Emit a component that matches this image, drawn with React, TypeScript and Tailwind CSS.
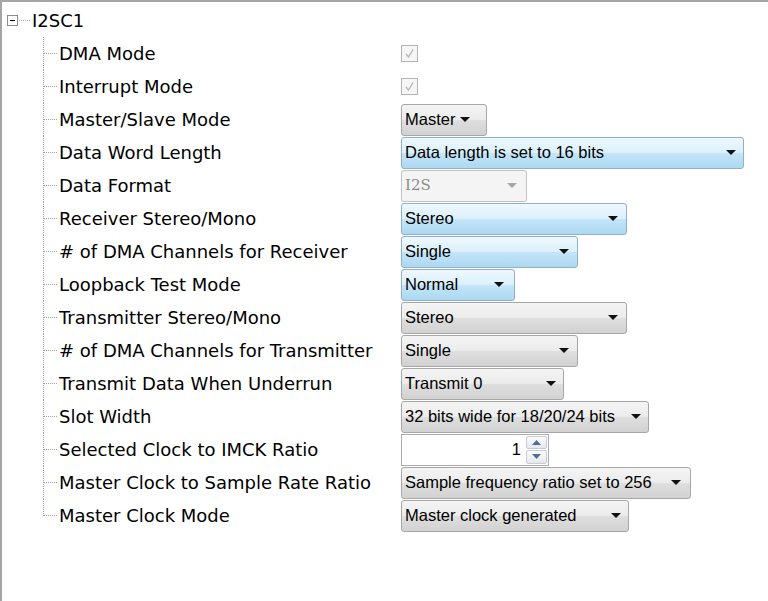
import React from 'react';

type Tone = 'gray' | 'blue' | 'off';

type Ctrl =
  | { kind: 'check' }
  | { kind: 'combo'; value: string; w: string; tone: Tone; pr: string }
  | { kind: 'spin'; value: string; w: string };

interface Row {
  label: string;
  ctrl: Ctrl;
}

const rows: Row[] = [
  { label: 'DMA Mode', ctrl: { kind: 'check' } },
  { label: 'Interrupt Mode', ctrl: { kind: 'check' } },
  { label: 'Master/Slave Mode', ctrl: { kind: 'combo', value: 'Master', w: 'w-[86px]', tone: 'gray', pr: 'pr-[16px]' } },
  { label: 'Data Word Length', ctrl: { kind: 'combo', value: 'Data length is set to 16 bits', w: 'w-[343px]', tone: 'blue', pr: 'pr-[7px]' } },
  { label: 'Data Format', ctrl: { kind: 'combo', value: 'I2S', w: 'w-[126px]', tone: 'off', pr: 'pr-[9px]' } },
  { label: 'Receiver Stereo/Mono', ctrl: { kind: 'combo', value: 'Stereo', w: 'w-[226px]', tone: 'blue', pr: 'pr-[8px]' } },
  { label: '# of DMA Channels for Receiver', ctrl: { kind: 'combo', value: 'Single', w: 'w-[177px]', tone: 'blue', pr: 'pr-[8px]' } },
  { label: 'Loopback Test Mode', ctrl: { kind: 'combo', value: 'Normal', w: 'w-[114px]', tone: 'blue', pr: 'pr-[10px]' } },
  { label: 'Transmitter Stereo/Mono', ctrl: { kind: 'combo', value: 'Stereo', w: 'w-[226px]', tone: 'gray', pr: 'pr-[8px]' } },
  { label: '# of DMA Channels for Transmitter', ctrl: { kind: 'combo', value: 'Single', w: 'w-[177px]', tone: 'gray', pr: 'pr-[8px]' } },
  { label: 'Transmit Data When Underrun', ctrl: { kind: 'combo', value: 'Transmit 0', w: 'w-[163px]', tone: 'gray', pr: 'pr-[7px]' } },
  { label: 'Slot Width', ctrl: { kind: 'combo', value: '32 bits wide for 18/20/24 bits', w: 'w-[248px]', tone: 'gray', pr: 'pr-[7px]' } },
  { label: 'Selected Clock to IMCK Ratio', ctrl: { kind: 'spin', value: '1', w: 'w-[148px]' } },
  { label: 'Master Clock to Sample Rate Ratio', ctrl: { kind: 'combo', value: 'Sample frequency ratio set to 256', w: 'w-[290px]', tone: 'gray', pr: 'pr-[9px]' } },
  { label: 'Master Clock Mode', ctrl: { kind: 'combo', value: 'Master clock generated', w: 'w-[228px]', tone: 'gray', pr: 'pr-[7px]' } },
];

const toneClass: Record<Tone, string> = {
  gray: 'border-[#a7a7a7] bg-[linear-gradient(to_bottom,#f4f4f4_0%,#ececec_48%,#dedede_52%,#d2d2d2_100%)] text-black',
  blue: 'border-[#8fb1c9] bg-[linear-gradient(to_bottom,#eef8fd_0%,#dcf0fb_48%,#c3e5f8_52%,#acd8f1_100%)] text-black',
  off: 'border-[#c2c2c2] bg-[#f4f4f4] text-[#8c8c8c]',
};

function Branch({ last }: { last: boolean }) {
  return (
    <svg width="16" height="33" className="shrink-0" shapeRendering="crispEdges">
      <line x1="1.5" y1="0" x2="1.5" y2={last ? 17 : 33} stroke="#a3a3a3" strokeDasharray="1 1" />
      <line x1="2" y1="16.5" x2="15" y2="16.5" stroke="#a3a3a3" strokeDasharray="1 1" />
    </svg>
  );
}

function Arrow({ off }: { off?: boolean }) {
  return (
    <svg width="10" height="5" className="shrink-0">
      <polygon points="0,0 10,0 5,5" fill={off ? '#a6a6a6' : '#111'} />
    </svg>
  );
}

function Control({ ctrl }: { ctrl: Ctrl }) {
  if (ctrl.kind === 'check') {
    return (
      <div className="w-[17px] h-[17px] border border-[#b4b4b4] bg-[#f6f6f6] flex items-center justify-center">
        <svg width="11" height="11">
          <path d="M2 6 L4.5 9 L9 1.5" stroke="#b3b3b3" strokeWidth="1.3" fill="none" />
        </svg>
      </div>
    );
  }
  if (ctrl.kind === 'spin') {
    return (
      <div className={`${ctrl.w} h-[32px] border border-[#ababab] bg-white flex items-stretch`}>
        <div className="flex-1 flex items-center justify-end pr-[5px] font-['Liberation_Sans',Arial,sans-serif] text-[16.5px] text-black">
          {ctrl.value}
        </div>
        <div className="w-[22px] flex flex-col gap-[1px] py-[1px] pr-[1px]">
          <div className="flex-1 border border-[#c5ccd6] rounded-[2px] bg-[linear-gradient(to_bottom,#fbfbfb,#e6e9ee)] flex items-center justify-center">
            <svg width="9" height="5"><polygon points="0,5 9,5 4.5,0" fill="#4f6c9a" /></svg>
          </div>
          <div className="flex-1 border border-[#c5ccd6] rounded-[2px] bg-[linear-gradient(to_bottom,#fbfbfb,#e6e9ee)] flex items-center justify-center">
            <svg width="9" height="5"><polygon points="0,0 9,0 4.5,5" fill="#4f6c9a" /></svg>
          </div>
        </div>
      </div>
    );
  }
  const serif = ctrl.tone === 'off' ? "font-['DejaVu_Serif',serif] text-[15px]" : "font-['Liberation_Sans',Arial,sans-serif] text-[16.5px]";
  return (
    <div className={`${ctrl.w} h-[32px] border rounded-[3px] flex items-center justify-between pl-[3px] ${ctrl.pr} ${toneClass[ctrl.tone]}`}>
      <span className={`${serif} whitespace-nowrap leading-none`}>{ctrl.value}</span>
      <Arrow off={ctrl.tone === 'off'} />
    </div>
  );
}

export default function App() {
  return (
    <div className="w-[768px] h-[601px] bg-white border-t-2 border-l-2 border-[#a5a5a5] pt-[2px] font-['DejaVu_Sans',Verdana,sans-serif] text-black overflow-hidden">
      <div className="flex items-center h-[33px]">
        <div className="w-[5px] shrink-0" />
        <div className="w-[11px] h-[11px] border border-[#8c8c8c] bg-white flex items-center justify-center shrink-0">
          <div className="w-[5px] h-[1px] bg-black" />
        </div>
        <svg width="14" height="33" className="shrink-0" shapeRendering="crispEdges">
          <line x1="1" y1="16.5" x2="13" y2="16.5" stroke="#a3a3a3" strokeDasharray="1 1" />
        </svg>
        <span className="text-[18px] leading-none">I2SC1</span>
      </div>

      {rows.map((row, i) => (
        <div key={i} className="flex items-center h-[33px]">
          <div className="w-[399px] shrink-0 flex items-center">
            <div className="w-[40px] shrink-0" />
            <Branch last={i === rows.length - 1} />
            <span className="text-[18px] leading-none whitespace-nowrap pl-[1px]">{row.label}</span>
          </div>
          <Control ctrl={row.ctrl} />
        </div>
      ))}
    </div>
  );
}
